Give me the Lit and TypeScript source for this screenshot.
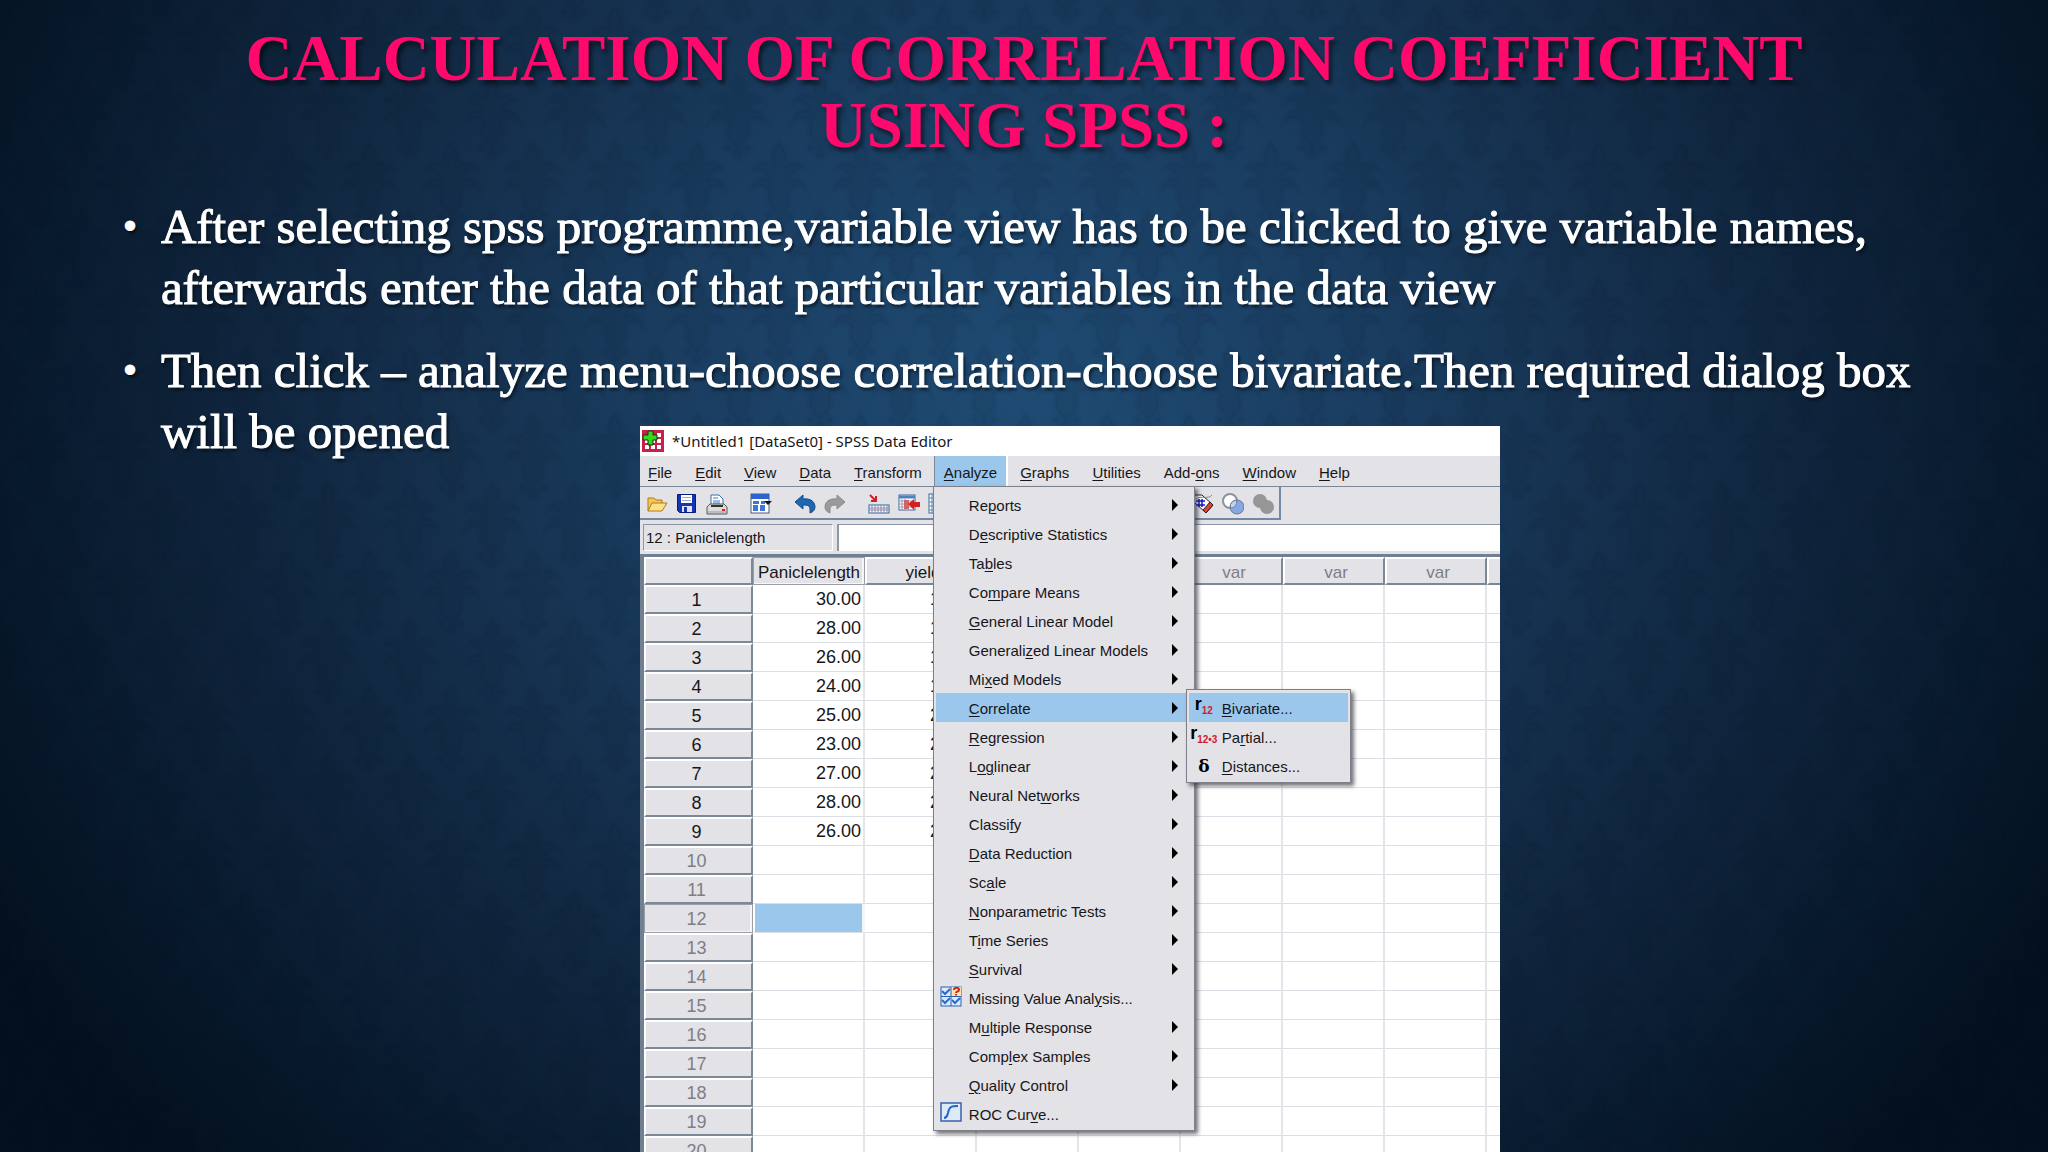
import { LitElement, html, svg, css, nothing } from "lit";
import { customElement } from "lit/decorators.js";
import { classMap } from "lit/directives/class-map.js";

type Entry = { label: string; key: number; len?: number; icon?: string; leaf?: boolean };

const MENU_BAR: Entry[] = [
  { label: "File", key: 0 },
  { label: "Edit", key: 0 },
  { label: "View", key: 0 },
  { label: "Data", key: 0 },
  { label: "Transform", key: 0 },
  { label: "Analyze", key: 0 },
  { label: "Graphs", key: 0 },
  { label: "Utilities", key: 0 },
  { label: "Add-ons", key: 4 },
  { label: "Window", key: 0 },
  { label: "Help", key: 0 },
];

const ANALYZE: Entry[] = [
  { label: "Reports", key: 2 },
  { label: "Descriptive Statistics", key: 1 },
  { label: "Tables", key: 2 },
  { label: "Compare Means", key: 2 },
  { label: "General Linear Model", key: 0 },
  { label: "Generalized Linear Models", key: 8 },
  { label: "Mixed Models", key: 2 },
  { label: "Correlate", key: 0 },
  { label: "Regression", key: 0 },
  { label: "Loglinear", key: 1, len: 2 },
  { label: "Neural Networks", key: 10 },
  { label: "Classify", key: 6 },
  { label: "Data Reduction", key: 0 },
  { label: "Scale", key: 2 },
  { label: "Nonparametric Tests", key: 0 },
  { label: "Time Series", key: 1 },
  { label: "Survival", key: 0 },
  { label: "Missing Value Analysis...", key: 18, icon: "missing", leaf: true },
  { label: "Multiple Response", key: 1 },
  { label: "Complex Samples", key: 4 },
  { label: "Quality Control", key: 0 },
  { label: "ROC Curve...", key: 7, icon: "roc", leaf: true },
];

const CORRELATE: Entry[] = [
  { label: "Bivariate...", key: 0, icon: "r12" },
  { label: "Partial...", key: 2, icon: "r123" },
  { label: "Distances...", key: 0, icon: "delta" },
];

const CASES: [string, string][] = [
  ["30.00", "15.00"],
  ["28.00", "16.00"],
  ["26.00", "17.00"],
  ["24.00", "19.00"],
  ["25.00", "20.00"],
  ["23.00", "21.00"],
  ["27.00", "22.00"],
  ["28.00", "23.00"],
  ["26.00", "24.00"],
];

const ROWS = Array.from({ length: 20 }, (_, i) => i + 1);
const SPARE = [0, 1, 2, 3, 4, 5];

const mnemonic = (e: Entry) => {
  const end = e.key + (e.len ?? 1);
  return html`<span>${e.label.slice(0, e.key)}<u>${e.label.slice(e.key, end)}</u>${e.label.slice(end)}</span>`;
};

const ICONS: Record<string, unknown> = {
  open: svg`<path d="M2 18V5h6l2 2h6v3" fill="#f4c65a" stroke="#b07a1c"/><path d="M2 18 6 10h15l-5 8z" fill="#ffe08a" stroke="#b07a1c"/>`,
  save: svg`<path d="M1.500 1.500h18v18h-16l-2-2z" fill="#1634b4" stroke="#0a1a78"/><rect x="5" y="2" width="11" height="8" fill="#fff"/><rect x="6" y="4" width="9" height="1" fill="#9ab"/><rect x="6" y="7" width="9" height="1" fill="#9ab"/><rect x="6" y="13" width="10" height="6" fill="#dfe4f2"/><rect x="8" y="14" width="3" height="5" fill="#1634b4"/>`,
  print: svg`<path d="M5 12V2h8l4 4v6" fill="#fff" stroke="#3a6ea5"/><path d="M7 5h5M7 8h7M7 10h7" stroke="#3a7bd0"/><path d="M1 14l3-3h14l3 3v7H1z" fill="#dcdcdc" stroke="#555"/><path d="M5 13h12" stroke="#333" stroke-width="2"/><rect x="16" y="16" width="3" height="2" fill="#d22"/><path d="M2 19h18" stroke="#999"/>`,
  dialog: svg`<rect x="1" y="1" width="18" height="19" fill="#fff" stroke="#4a5a78"/><rect x="1" y="1" width="18" height="5" fill="#2f62cc"/><path d="M3 8h6v3H3zM11 8h4v3h-4z" fill="#3f74d8"/><path d="M3 12h5v6H3zM10 12h5v6h-5z" fill="#3f74d8"/><path d="M14 8h8l-4 4z" fill="#111"/>`,
  undo: svg`<path d="M1 9 9 2v4c8-1 12 3 12 8 0 3-2 5-5 6V16c0-3-2-4-7-4v4z" fill="#1f66b0" stroke="#15508c"/>`,
  redo: svg`<path d="M21 9 13 2v4C5 5 1 9 1 14c0 3 2 5 5 6v-4c0-3 2-4 7-4v4z" fill="#9a9a9a" stroke="#8c8c8c"/>`,
  goCase: svg`<path d="M2 2l6 6M8 3v5H3" fill="none" stroke="#cc2222" stroke-width="2"/><rect x="1" y="12" width="20" height="8" fill="#fff" stroke="#2c6aa0"/><path d="M1 15h20M1 17h20M4 12v8M7 12v8M10 12v8M13 12v8M16 12v8M19 12v8" stroke="#88a"/>`,
  vars: svg`<rect x="1" y="2" width="16" height="15" fill="#fff" stroke="#3d6b9c"/><path d="M1 4h16" stroke="#4b82be" stroke-width="3"/><path d="M2 8h15M2 11h15M2 14h15M4 6v11M7 6v11" stroke="#99a"/><rect x="6" y="7" width="5" height="9" fill="#c66"/><path d="M10 11l6-5v3h6v5h-6v3z" fill="#d42020"/>`,
  grid: svg`<rect x="1" y="1" width="19" height="19" fill="#fff" stroke="#3d6b9c"/><path d="M4 1v19M1 5h19M1 9h19M1 13h19M1 17h19" stroke="#5a86b8"/>`,
  tag: svg`<path d="M2 2l8 0 11 10-7 8L2 9z" fill="#fff" stroke="#222"/><path d="M21 12l-7 8-3-3 7-8z" fill="#e04030" stroke="#222"/><path d="M7 6v8M10 6v8M4 8h9M4 12h9" stroke="#1616c8" stroke-width="1.500"/><path d="M4 6C9 2 16 7 20 2" fill="none" stroke="#888"/>`,
  circles: svg`<circle cx="8" cy="8" r="7" fill="#fff" stroke="#8a93a0" stroke-width="2"/><circle cx="15" cy="14" r="7" fill="#86a8e4" stroke="#6a7890" stroke-width="1"/><path d="M8.500 11.500A7 7 0 0 1 14.500 7 7 7 0 0 1 13 13.500 7 7 0 0 1 8.500 15z" fill="#c2d2f0" stroke="#75839a"/>`,
  merged: svg`<circle cx="8" cy="8" r="7" fill="#969696"/><circle cx="15" cy="14" r="7" fill="#969696"/>`,
  app: svg`<rect width="22" height="22" fill="#c81f4c"/><path d="M3 9h4v4H3zM9 9h4v4H9zM15 9h4v4h-4zM3 15h4v4H3zM9 15h4v4H9zM15 15h4v4h-4zM15 3h4v4h-4z" fill="#fff"/><path d="M6 1h5v4h4v5h-4v5H6v-5H1V5h5z" fill="#35d81e" stroke="#0a3a08" stroke-width="1"/>`,
  missing: svg`<rect x="1" y="1" width="20" height="19" fill="#dcebfa" stroke="#2c5fb4"/><rect x="11" y="1" width="10" height="9" fill="#ffe0b0"/><path d="M11 1v19M1 10.500h20" stroke="#2c5fb4"/><path d="M2 5l3 3 5-5M2 14l3 3 5-5M12 14l3 3 5-5" fill="none" stroke="#2a6ad0" stroke-width="2"/><path d="M14 4c0-3 5-3 5 0 0 2-3 1-3 3M16 8v1.500" fill="none" stroke="#d02818" stroke-width="2"/>`,
  roc: svg`<rect x="1" y="1" width="20" height="18" fill="#dcebfa" stroke="#3a5fae" stroke-width="1.500"/><path d="M4 16c3 0 3-2 4-5 1-6 3-7 10-7" fill="none" stroke="#2463c8" stroke-width="2"/>`,
};

const icon = (name: string) =>
  html`<svg class="icon" viewBox="0 0 22 22" aria-hidden="true">${ICONS[name]}</svg>`;

const symbol = (name?: string) => {
  if (name === "r12") return html`<span class="sym"><b>r</b><i>12</i></span>`;
  if (name === "r123") return html`<span class="sym"><b>r</b><i>12•3</i></span>`;
  return html`<span class="sym delta"><b>δ</b></span>`;
};

@customElement("damask-backdrop")
export class DamaskBackdrop extends LitElement {
  static styles = css`
    :host { position: absolute; inset: 0; display: block; }
    svg { display: block; width: 100%; height: 100%; }
  `;

  render() {
    const motif = svg`
      <path d="M0-44c8 8 10 16 4 24 10-8 18-4 22 4-8-2-12 2-14 8 8-2 14 4 16 12-8-6-14-4-18 2 4 8 0 16-10 24-10-8-14-16-10-24-4-6-10-8-18-2 2-8 8-14 16-12-2-6-6-10-14-8 4-8 12-12 22-4-6-8-4-16 4-24z"/>
      <circle cy="36" r="5"/><circle cx="-10" cy="30" r="3"/><circle cx="10" cy="30" r="3"/>`;
    return html`<svg aria-hidden="true">
      <defs>
        <pattern id="damask" width="164" height="136" patternUnits="userSpaceOnUse">
          <g fill="#020c1c" fill-opacity="0.07" stroke="#020c1c" stroke-width="6" stroke-opacity="0.03">
            <g transform="translate(41 50)">${motif}</g>
            <g transform="translate(123 50)">${motif}</g>
            <g transform="translate(82 118)">${motif}</g>
            <g transform="translate(82 -18)">${motif}</g>
            <g transform="translate(0 118)">${motif}</g>
            <g transform="translate(0 -18)">${motif}</g>
            <g transform="translate(164 118)">${motif}</g>
            <g transform="translate(164 -18)">${motif}</g>
          </g>
        </pattern>
      </defs>
      <rect width="100%" height="100%" fill="url(#damask)"></rect>
    </svg>`;
  }
}

@customElement("data-editor")
export class DataEditor extends LitElement {
  static styles = css`
    :host {
      display: block;
      overflow: hidden;
      background: #fff;
      color: #16161a;
      font: 15px/20px "Liberation Sans", Arial, sans-serif;
    }
    button { font: inherit; color: inherit; background: none; border: 0; padding: 0; margin: 0; text-align: left; }
    ul { list-style: none; margin: 0; padding: 0; }
    u { text-underline-offset: 2px; text-decoration-thickness: 1px; }
    .icon { width: 22px; height: 22px; flex: none; display: block; }

    .titlebar { display: flex; align-items: center; gap: 8px; height: 30px; padding: 0 2px; font: 15px/20px "Noto Sans", "Open Sans", sans-serif; }
    .menubar { display: flex; gap: 1px; height: 31px; background: #e3e2e7; border-bottom: 1px solid #7d8896; box-sizing: border-box; }
    .menubar > li { position: relative; display: flex; }
    .menubar > li > button { padding: 3px 11px 0; }
    .menubar > li:first-child > button { padding-left: 8px; }
    .menubar > li.open > button { background: #9bc7ec; border-left: 1px solid #7d8896; border-right: 2px solid #fff; padding: 3px 9px 0; }

    .toolbar { display: flex; background: #e3e2e7; height: 33px; }
    .tools { display: flex; gap: 22px; box-sizing: border-box; width: 641px; padding: 6px 5px 3px 6px; border: solid #7389a3; border-width: 0 2px 2px 0; }
    .tools div { display: flex; gap: 8px; }
    .tools .last { margin-left: auto; }

    .cellbar { display: flex; gap: 4px; height: 34px; box-sizing: border-box; padding: 4px 0 3px 3px; background: #e3e2e7; }
    .cellbar label { width: 190px; box-sizing: border-box; padding: 3px 2px; border: 1px solid #8d97a6; border-right-color: #fff; border-bottom-color: #fff; }
    .cellbar input { flex: 1; min-width: 0; border: 1px solid #8d97a6; border-width: 1px 0 0 2px; padding: 0 4px; font: inherit; background: #fff; outline: 0; }

    .sheet { border: solid #6f8093; border-width: 3px 0 0 4px; overflow: hidden; }
    table { table-layout: fixed; border-collapse: separate; border-spacing: 0; width: 945px; }
    .c-no { width: 109px; }
    .c-one { width: 112px; }
    .c-two { width: 112px; }
    .c-var { width: 102px; }
    th, td { box-sizing: border-box; height: 29px; padding: 0 2px 0 4px; font: 18px/20px "Liberation Sans", Arial, sans-serif; white-space: nowrap; }
    td { text-align: right; border-right: 2px solid #e4e5ea; border-bottom: 1px solid #dcdee5; }
    td.under { padding: 0; }
    th { background: #e3e2e7; border: solid #fff; border-width: 2px 2px 1px 2px; border-right: 2px solid #7d8896; border-bottom: 2px solid #7d8896; font-weight: normal; text-align: center; }
    thead th { height: 28px; font-size: 17px; padding: 4px 0 0; }
    thead th:nth-child(n + 3) { padding-left: 4px; }
    tbody th { padding: 0 6px 0 2px; }
    thead th.active, tbody th.active { border: 1px solid #9a9da8; box-shadow: inset -2px -1px #f6f6f9; }
    .dim { color: #7e7e86; }
    td.picked { background: #9bc7ec; background-clip: padding-box; border-left: 2px solid #fff; border-right: 3px solid #f4f5f8; }

    .menu { position: absolute; z-index: 2; background: #e3e2e7; border: 1px solid #7d8088; padding: 3px 2px 2px; box-shadow: 3px 3px 4px rgba(40, 40, 50, 0.65); box-sizing: border-box; }
    .main { top: 100%; left: -1px; width: 262px; }
    .sub { top: -4px; left: 250px; width: 165px; }
    .menu li { position: relative; }
    .menu li > button { display: grid; grid-template-columns: 33px 1fr 20px; align-items: center; width: 100%; height: 29px; padding-top: 2px; white-space: nowrap; }
    .menu li.hot > button { background: #9bc7ec; }
    .menu .icon { margin: -4px 0 0 4px; }
    .main li > button > span { grid-column: 2; }
    .arrow { grid-column: 3; width: 0; height: 0; margin-top: -2px; border: solid transparent; border-width: 6px 0 6px 6px; border-left-color: #000; }
    .sym { display: flex; justify-content: center; align-items: flex-start; height: 22px; width: 30px; }
    .sym b { font: bold 18px/12px "Liberation Sans", sans-serif; color: #000; }
    .sym i { font: normal bold 10px/10px "Liberation Sans", sans-serif; color: #cc2030; padding-top: 8px; }
    .sym.delta b { font: bold 17px/20px "DejaVu Serif", serif; }
    .main .sub li > button > span { grid-column: auto; }
  `;

  private subMenu() {
    return html`<ul class="menu sub" role="menu">
      ${CORRELATE.map(
        (e, i) => html`<li role="none" class=${classMap({ hot: i === 0 })}>
          <button role="menuitem">${symbol(e.icon)}${mnemonic(e)}</button>
        </li>`
      )}
    </ul>`;
  }

  private mainMenu() {
    return html`<ul class="menu main" role="menu">
      ${ANALYZE.map((e) => {
        const hot = e.label === "Correlate";
        return html`<li role="none" class=${classMap({ hot })}>
          <button role="menuitem">
            ${e.icon ? icon(e.icon) : nothing}${mnemonic(e)}${e.leaf ? nothing : html`<i class="arrow"></i>`}
          </button>
          ${hot ? this.subMenu() : nothing}
        </li>`;
      })}
    </ul>`;
  }

  private tools(names: [string, string][], last = false) {
    return html`<div class=${classMap({ last })}>
      ${names.map(([name, label]) => html`<button aria-label=${label}>${icon(name)}</button>`)}
    </div>`;
  }

  render() {
    return html`
      <div class="titlebar">${icon("app")}<span>*Untitled1 [DataSet0] - SPSS Data Editor</span></div>
      <ul class="menubar" role="menubar">
        ${MENU_BAR.map((e) => {
          const open = e.label === "Analyze";
          return html`<li role="none" class=${classMap({ open })}>
            <button role="menuitem">${mnemonic(e)}</button>
            ${open ? this.mainMenu() : nothing}
          </li>`;
        })}
      </ul>
      <div class="toolbar">
        <div class="tools" role="toolbar">
          ${this.tools([["open", "Open"], ["save", "Save"], ["print", "Print"]])}
          ${this.tools([["dialog", "Dialog recall"]])}
          ${this.tools([["undo", "Undo"], ["redo", "Redo"]])}
          ${this.tools([["goCase", "Go to case"], ["vars", "Variables"], ["grid", "Find"]])}
          ${this.tools([["tag", "Value labels"], ["circles", "Use sets"], ["merged", "Show all"]], true)}
        </div>
      </div>
      <div class="cellbar">
        <label for="cell">12 : Paniclelength</label>
        <input id="cell" type="text" />
      </div>
      <div class="sheet">
        <table>
          <colgroup>
            <col class="c-no" /><col class="c-one" /><col class="c-two" />
            ${SPARE.map(() => html`<col class="c-var" />`)}
          </colgroup>
          <thead>
            <tr>
              <th></th>
              <th class="active" scope="col">Paniclelength</th>
              <th scope="col">yield</th>
              ${SPARE.map(() => html`<th class="dim" scope="col">var</th>`)}
            </tr>
          </thead>
          <tbody>
            ${ROWS.map((n) => {
              const data = CASES[n - 1];
              const active = n === 12;
              return html`<tr>
                <th scope="row" class=${classMap({ dim: !data, active })}>${n}</th>
                <td class=${classMap({ picked: active })}>${data?.[0]}</td>
                <td class="under">${data?.[1]}</td>
                ${SPARE.map(() => html`<td></td>`)}
              </tr>`;
            })}
          </tbody>
        </table>
      </div>
    `;
  }
}

@customElement("app-root")
export class AppRoot extends LitElement {
  static styles = css`
    :host { display: block; }
    .slide {
      position: relative;
      height: 100vh;
      overflow: hidden;
      box-sizing: border-box;
      padding-top: 25px;
      background: radial-gradient(ellipse 58% 95% at 50% 34%, #1f4b73 0%, #1a3d60 30%, #122943 60%, #081a2d 84%, #03101f 100%);
      font-family: "Liberation Serif", "Times New Roman", serif;
    }
    .content { position: relative; }
    h1 {
      margin: 0 auto;
      width: 80%;
      font-size: 65px;
      line-height: 67px;
      font-weight: bold;
      text-align: center;
      color: #ff0a6c;
      text-shadow: 3px 4px 4px rgba(0, 0, 0, 0.55);
    }
    .points {
      list-style: none;
      display: grid;
      gap: 22px;
      margin: 37px 4% 0 6%;
      padding: 0;
      color: #fff;
      font-size: 49px;
      line-height: 61px;
      -webkit-text-stroke: 1px #fff;
      text-shadow: 2px 3px 3px rgba(0, 0, 0, 0.6);
    }
    .points li { display: grid; grid-template-columns: 38px 1fr; }
    .points li::before { content: "•"; font-size: 40px; }
    data-editor { width: 42%; margin: -36px 0 0 31.25%; }
  `;

  render() {
    return html`<main class="slide">
      <damask-backdrop></damask-backdrop>
      <div class="content">
        <h1>CALCULATION OF CORRELATION COEFFICIENT USING SPSS :</h1>
        <ul class="points">
          <li><span>After selecting spss programme,variable view has to be clicked to give variable names, afterwards enter the data of that particular variables in the data view</span></li>
          <li><span>Then click – analyze menu-choose correlation-choose bivariate.Then required dialog box will be opened</span></li>
        </ul>
        <data-editor></data-editor>
      </div>
    </main>`;
  }
}
